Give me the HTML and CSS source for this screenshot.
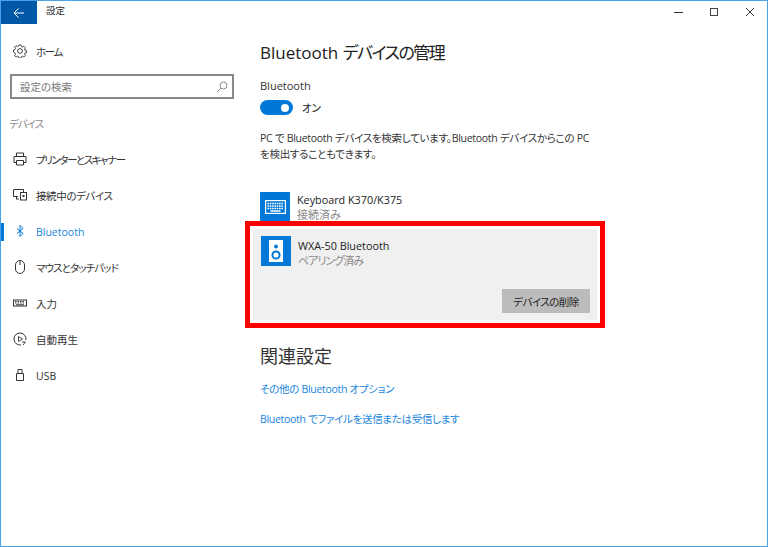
FILE: index.html
```html
<!DOCTYPE html>
<html lang="ja">
<head>
<meta charset="utf-8">
<title>設定</title>
<link rel="stylesheet" href="styles.css">
</head>
<body>
<div class="window">
  <header class="titlebar">
    <div class="back"><svg width="12" height="12" viewBox="0 0 12 12"><path d="M11 6H1.200M5.600 1.400 1 6l4.600 4.600" fill="none" stroke="#fff" stroke-width="1"/></svg></div>
    <div class="title">設定</div>
    <div class="controls">
      <div class="ctl"><svg width="10" height="10" viewBox="0 0 10 10"><path d="M0 5.500h9" stroke="#333" fill="none"/></svg></div>
      <div class="ctl"><svg width="10" height="10" viewBox="0 0 10 10"><rect x="1.500" y="1.500" width="7" height="7" stroke="#444" fill="none"/></svg></div>
      <div class="ctl"><svg width="10" height="10" viewBox="0 0 10 10"><path d="M1 1l8 8M9 1l-8 8" stroke="#444" fill="none"/></svg></div>
    </div>
  </header>
  <div class="body">
    <nav class="sidebar">
      <a class="nav home">
        <svg class="ic" width="14" height="14" viewBox="0 0 14 14"><path d="M5.900 1h2.200l.3 1.600 1.100.5 1.400-.9 1.500 1.500-.9 1.400.5 1.100 1.600.3v2.200l-1.600.3-.5 1.100.9 1.400-1.500 1.500-1.400-.9-1.100.5-.3 1.600H5.900l-.3-1.600-1.100-.5-1.400.9-1.500-1.500.9-1.400-.5-1.100L.4 8.100V5.900L2 5.600l.5-1.100-.9-1.400 1.500-1.500 1.400.9 1.100-.5z" fill="none" stroke="#333" stroke-width=".9"/><circle cx="7" cy="7" r="2.400" fill="none" stroke="#333" stroke-width=".9"/></svg>
        <span class="tight-home">ホーム</span>
      </a>
      <div class="search"><span>設定の検索</span>
        <svg width="12" height="12" viewBox="0 0 12 12"><circle cx="7.500" cy="4.500" r="3.500" fill="none" stroke="#888"/><path d="M5 7 1 11" stroke="#888" fill="none"/></svg>
      </div>
      <div class="group">デバイス</div>
      <a class="nav">
        <svg class="ic" width="14" height="14" viewBox="0 0 14 14"><path d="M3.500 4.500V1h7v3.500M3.500 10.500H1v-6h12v6h-2.500M3.500 8.500h7V13h-7z" fill="none" stroke="#333"/></svg>
        <span class="tight-printer">プリンターとスキャナー</span>
      </a>
      <a class="nav">
        <svg class="ic" width="14" height="14" viewBox="0 0 14 14"><path d="M5 8.500H.5V1.500h10V4M3 11h3M3.500 8.500V11" fill="none" stroke="#333"/><rect x="7.500" y="4.500" width="6" height="7.500" fill="none" stroke="#333"/><path d="M9.500 7h2v2h-2z" fill="#333"/></svg>
        <span class="tight-device">接続中のデバイス</span>
      </a>
      <a class="nav active">
        <svg class="ic" width="14" height="14" viewBox="0 0 14 14"><path d="M4 4.500l6 5L7 12.500V1.500l3 3-6 5" fill="none" stroke="#0078d7"/></svg>
        <span class="latin">Bluetooth</span>
      </a>
      <a class="nav">
        <svg class="ic" width="14" height="14" viewBox="0 0 14 14"><rect x="2.500" y=".5" width="9" height="13" rx="4.500" fill="none" stroke="#333"/><path d="M7 1v4" stroke="#333" fill="none"/></svg>
        <span class="tight-mouse">マウスとタッチパッド</span>
      </a>
      <a class="nav">
        <svg class="ic" width="14" height="14" viewBox="0 0 14 14"><rect x=".5" y="4" width="13" height="6" fill="none" stroke="#333"/><path d="M2 5.500h10M2 7h10" stroke="#333" stroke-dasharray="1.500 1" fill="none"/><path d="M3 8.800h8" stroke="#333" fill="none"/></svg>
        <span>入力</span>
      </a>
      <a class="nav">
        <svg class="ic" width="14" height="14" viewBox="0 0 14 14"><path d="M8 12.900A6 6 0 1 1 12.900 8" fill="none" stroke="#333"/><path d="M5.500 4.500v5L9.500 7zM9 10h3.500M10 13l2.500-3" fill="none" stroke="#333" stroke-width=".9"/></svg>
        <span>自動再生</span>
      </a>
      <a class="nav">
        <svg class="ic" width="14" height="14" viewBox="0 0 14 14"><path d="M5 1.500h4v4H5zM3.500 5.500h7v7h-7z" fill="none" stroke="#333"/></svg>
        <span class="latin">USB</span>
      </a>
    </nav>
    <main class="content">
      <h1 class="heading">Bluetooth <span class="heading-ja">デバイスの管理</span></h1>
      <div class="label">Bluetooth</div>
      <div class="toggle-row"><div class="toggle"></div><span>オン</span></div>
      <p class="desc">PC で Bluetooth デバイスを検索しています。Bluetooth デバイスからこの PC を検出することもできます。</p>
      <div class="device device-first">
        <div class="tile tile-cut"><svg width="21" height="14" viewBox="0 0 21 14"><rect x=".6" y=".6" width="19.800" height="12.800" fill="none" stroke="#fff" stroke-width="1.200"/><path d="M2.500 3.500h16M2.500 6h16M2.500 8.500h16" stroke="#fff" stroke-width="1.600" stroke-dasharray="1.600 .7" fill="none"/><path d="M5.500 11h10" stroke="#fff" stroke-width="1.500" fill="none"/></svg></div>
        <div class="dev-text"><div class="dev-name">Keyboard K370/K375</div><div class="dev-status">接続済み</div></div>
      </div>
      <div class="highlight">
        <div class="panel">
          <div class="device">
            <div class="tile"><svg width="14" height="22" viewBox="0 0 14 22"><rect width="14" height="22" fill="#fff"/><circle cx="7" cy="6.500" r="1.900" fill="#0078d7"/><circle cx="7" cy="15" r="3.600" fill="none" stroke="#0078d7" stroke-width="2"/></svg></div>
            <div class="dev-text dev-text-panel"><div class="dev-name">WXA-50 Bluetooth</div><div class="dev-status dev-status-kana">ペアリング済み</div></div>
          </div>
          <div class="actions"><button class="remove">デバイスの削除</button></div>
        </div>
      </div>
      <h2 class="related">関連設定</h2>
      <a class="link first-link">その他の Bluetooth オプション</a>
      <a class="link">Bluetooth でファイルを送信または受信します</a>
    </main>
  </div>
</div>
</body>
</html>
```
FILE: styles.css
```css
* { box-sizing: border-box; }
html, body { margin: 0; padding: 0; }
body {
  width: 768px;
  height: 547px;
  overflow: hidden;
  font-family: "Open Sans", "Noto Sans CJK JP", sans-serif;
  font-feature-settings: "palt";
  font-size: 11px;
  color: #222;
  background: #fff;
}
.window {
  width: 768px;
  height: 547px;
  border: 1px solid #4aa3e6;
  display: flex;
  flex-direction: column;
}
.titlebar {
  height: 23px;
  display: flex;
  align-items: center;
  flex: none;
}
.back {
  width: 36px;
  height: 23px;
  background: #0058a6;
  display: flex;
  align-items: center;
  justify-content: center;
}
.title { margin-left: 9px; font-size: 9.500px; line-height: 20px; padding-bottom: 3px; color: #333; }
.controls { margin-left: auto; display: flex; padding-bottom: 2px; }
.ctl { width: 36px; height: 21px; display: flex; align-items: center; justify-content: center; margin-right: -0.500px; }
.body { display: flex; flex: 1; min-height: 0; }
.sidebar { width: 244px; flex: none; display: flex; flex-direction: column; }
.nav {
  height: 36px;
  display: flex;
  align-items: center;
  padding-left: 12px;
  position: relative;
  font-size: 10.500px;
  color: #333;
  flex: none;
}
.nav .ic { flex: none; }
.nav span { margin-left: 9px; }
.nav .latin { padding-top: 2px; }
.tight-home { letter-spacing: -1.300px; }
.tight-printer { letter-spacing: -1.450px; }
.tight-device { letter-spacing: -0.400px; }
.tight-mouse { letter-spacing: -0.900px; }
.home { margin-top: 9px; }
.search {
  margin: 5px 0 0 9px;
  width: 224px;
  height: 25px;
  border: 2px solid #888;
  display: flex;
  align-items: center;
  justify-content: space-between;
  padding: 0 4px 0 8px;
  color: #777;
  font-size: 10.500px;
}
.group { margin: 18px 0 9px 8px; height: 15px; line-height: 15px; color: #8a8a8a; font-size: 10.500px; letter-spacing: -1px; }
.active { color: #1a86dc; }
.active::before {
  content: "";
  position: absolute;
  left: 0;
  top: 10px;
  width: 3px;
  height: 18px;
  background: #0078d7;
}
.content { flex: 1; padding: 0 0 0 15px; min-width: 0; }
.heading { margin: 17px 0 0; font-size: 17px; font-weight: 400; line-height: 24px; color: #222; }
.heading-ja { letter-spacing: -1.500px; }
.label { margin-top: 14px; line-height: 14px; font-size: 11px; color: #333; }
.toggle-row { margin-top: 7px; display: flex; align-items: center; font-size: 10.500px; height: 15px; }
.toggle-row span { margin-left: 9px; }
.toggle {
  width: 33px;
  height: 15px;
  border-radius: 8px;
  background: #0078d7;
  position: relative;
}
.toggle::after {
  content: "";
  position: absolute;
  right: 4px;
  top: 3.500px;
  width: 8px;
  height: 8px;
  border-radius: 50%;
  background: #fff;
}
.desc { margin: 15px 0 0; width: 335px; line-height: 16px; font-size: 10.500px; color: #333; letter-spacing: -0.280px; }
.device { display: flex; align-items: flex-start; }
.device-first { margin-top: 30px; height: 29px; }
.tile {
  width: 30px;
  height: 30px;
  background: #0078d7;
  flex: none;
  display: flex;
  align-items: center;
  justify-content: center;
}
.tile-cut { height: 29px; padding-top: 1px; }
.dev-text { margin-left: 7px; }
.dev-text-panel { padding-top: 2px; }
.dev-name { font-size: 10.800px; line-height: 15px; color: #222; }
.dev-status { font-size: 11px; line-height: 14px; color: #8a8a8a; padding-top: 1px; }
.dev-status-kana { letter-spacing: -1px; }
.highlight {
  margin-left: -15px;
  width: 360px;
  height: 107px;
  border: 5px solid #f00;
  padding: 3px;
}
.panel {
  height: 91px;
  background: #f0f0f0;
  padding: 7px 7px 0 8px;
}
.actions { display: flex; justify-content: flex-end; margin-top: 21px; }
.remove {
  width: 88px;
  height: 24px;
  border: 0;
  background: #bcbcbc;
  font-family: inherit;
  font-feature-settings: inherit;
  font-size: 10.500px;
  letter-spacing: -0.500px;
  color: #222;
  padding: 0;
}
.related { margin: 17px 0 0; font-size: 18px; font-weight: 400; line-height: 22px; color: #333; }
.link { display: block; font-size: 10.500px; line-height: 15px; color: #1a86dc; margin-top: 15px; letter-spacing: -0.300px; }
.first-link { margin-top: 15px; }
```
